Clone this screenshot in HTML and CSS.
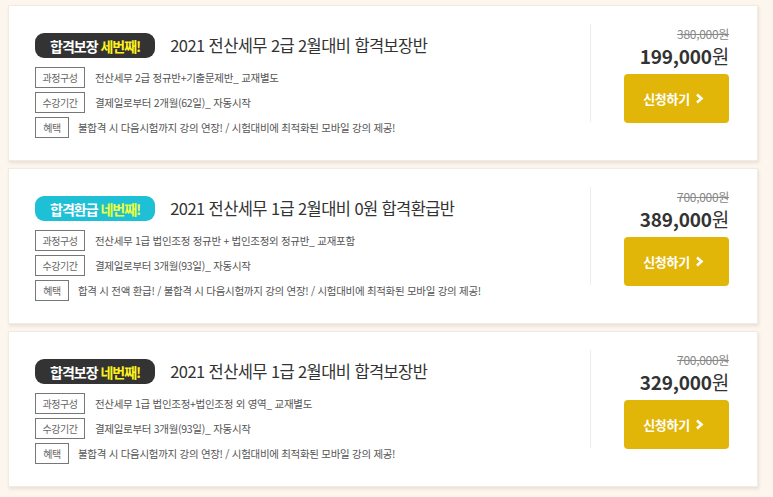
FILE: index.html
```html
<!DOCTYPE html>
<html lang="ko">
<head>
<meta charset="utf-8">
<link rel="stylesheet" href="styles.css">
</head>
<body>
<div class="page">
  <div class="card">
    <div class="info">
      <div class="head">
        <span class="badge dark">합격보장 <em>세번째!</em></span>
        <h2 class="title">2021 전산세무 2급 2월대비 합격보장반</h2>
      </div>
      <div class="row"><span class="tag">과정구성</span><span class="desc">전산세무 2급 정규반+기출문제반_ 교재별도</span></div>
      <div class="row"><span class="tag">수강기간</span><span class="desc">결제일로부터 2개월(62일)_ 자동시작</span></div>
      <div class="row"><span class="tag small">혜택</span><span class="desc">불합격 시 다음시험까지 강의 연장! / 시험대비에 최적화된 모바일 강의 제공!</span></div>
    </div>
    <div class="divider"></div>
    <div class="buy">
      <div class="old">380,000원</div>
      <div class="price">199,000<span class="won">원</span></div>
      <a class="btn">신청하기 <svg width="9" height="11" viewBox="0 0 9 11"><polyline points="2,1.5 6.5,5.5 2,9.5" fill="none" stroke="#fff" stroke-width="2.6"/></svg></a>
    </div>
  </div>

  <div class="card">
    <div class="info">
      <div class="head">
        <span class="badge cyan">합격환급 <em class="lime">네번째!</em></span>
        <h2 class="title">2021 전산세무 1급 2월대비 0원 합격환급반</h2>
      </div>
      <div class="row"><span class="tag">과정구성</span><span class="desc">전산세무 1급 법인조정 정규반 + 법인조정외 정규반_ 교재포함</span></div>
      <div class="row"><span class="tag">수강기간</span><span class="desc">결제일로부터 3개월(93일)_ 자동시작</span></div>
      <div class="row"><span class="tag small">혜택</span><span class="desc">합격 시 전액 환급! / 불합격 시 다음시험까지 강의 연장! / 시험대비에 최적화된 모바일 강의 제공!</span></div>
    </div>
    <div class="divider"></div>
    <div class="buy">
      <div class="old">700,000원</div>
      <div class="price">389,000<span class="won">원</span></div>
      <a class="btn">신청하기 <svg width="9" height="11" viewBox="0 0 9 11"><polyline points="2,1.5 6.5,5.5 2,9.5" fill="none" stroke="#fff" stroke-width="2.6"/></svg></a>
    </div>
  </div>

  <div class="card">
    <div class="info">
      <div class="head">
        <span class="badge dark">합격보장 <em>네번째!</em></span>
        <h2 class="title">2021 전산세무 1급 2월대비 합격보장반</h2>
      </div>
      <div class="row"><span class="tag">과정구성</span><span class="desc">전산세무 1급 법인조정+법인조정 외 영역_ 교재별도</span></div>
      <div class="row"><span class="tag">수강기간</span><span class="desc">결제일로부터 3개월(93일)_ 자동시작</span></div>
      <div class="row"><span class="tag small">혜택</span><span class="desc">불합격 시 다음시험까지 강의 연장! / 시험대비에 최적화된 모바일 강의 제공!</span></div>
    </div>
    <div class="divider"></div>
    <div class="buy">
      <div class="old">700,000원</div>
      <div class="price">329,000<span class="won">원</span></div>
      <a class="btn">신청하기 <svg width="9" height="11" viewBox="0 0 9 11"><polyline points="2,1.5 6.5,5.5 2,9.5" fill="none" stroke="#fff" stroke-width="2.6"/></svg></a>
    </div>
  </div>
</div>
</body>
</html>
```

FILE: styles.css
```css
html, body {
  margin: 0;
  padding: 0;
  background: #fcf6ee;
  font-family: "Noto Sans CJK KR", "Noto Sans", sans-serif;
  color: #333;
}
.page {
  padding: 5px 15px 0 8px;
}
.card {
  display: flex;
  box-sizing: border-box;
  width: 750px;
  height: 156px;
  margin-bottom: 7px;
  padding: 18px 28px 0 26px;
  background: #fff;
  border: 1px solid #f1ebe2;
  box-shadow: 1px 2px 3px rgba(120, 100, 80, 0.15);
}
.info {
  flex: 1;
  padding-top: 9px;
}
.head {
  display: flex;
  align-items: center;
  gap: 15px;
  margin-bottom: 9px;
}
.badge {
  display: inline-flex;
  align-items: center;
  height: 25px;
  padding: 0 15px;
  border-radius: 9px;
  color: #fff;
  font-weight: 700;
  font-size: 14px;
  letter-spacing: -1px;
  white-space: pre;
}
.badge em {
  font-style: normal;
  color: #fff21c;
}
.badge em.lime {
  color: #ecff3a;
}
.dark { background: #333; }
.cyan { background: #1ec0d6; }
.title {
  margin: 0;
  font-size: 16.5px;
  font-weight: 400;
  letter-spacing: -0.6px;
  color: #333;
  line-height: 25px;
}
.row {
  display: flex;
  align-items: center;
  gap: 10px;
  margin-bottom: 4px;
}
.tag {
  box-sizing: border-box;
  display: inline-flex;
  align-items: center;
  justify-content: center;
  width: 50px;
  height: 21px;
  border: 1px solid #777;
  font-size: 10px;
  letter-spacing: -0.5px;
  color: #666;
}
.tag.small {
  width: 34px;
  margin-right: -1px;
}
.desc {
  font-size: 10.5px;
  letter-spacing: -0.3px;
  color: #555;
}
.divider {
  width: 1px;
  height: 98px;
  background: #ececec;
}
.buy {
  width: 105px;
  margin-left: 33px;
  padding-top: 3px;
  text-align: right;
}
.old {
  font-size: 12px;
  line-height: 14px;
  color: #888;
  text-decoration: line-through;
  letter-spacing: -0.3px;
}
.price {
  font-size: 19px;
  line-height: 29px;
  font-weight: 700;
  color: #333;
  letter-spacing: -0.2px;
}
.won {
  font-weight: 400;
}
.btn {
  display: flex;
  align-items: center;
  justify-content: center;
  gap: 5px;
  margin-top: 4px;
  height: 49px;
  border-radius: 4px;
  background: #e2b608;
  color: #fff;
  font-size: 13px;
  font-weight: 700;
  letter-spacing: -0.3px;
  padding-right: 6px;
}
.btn svg { display: block; }
```
